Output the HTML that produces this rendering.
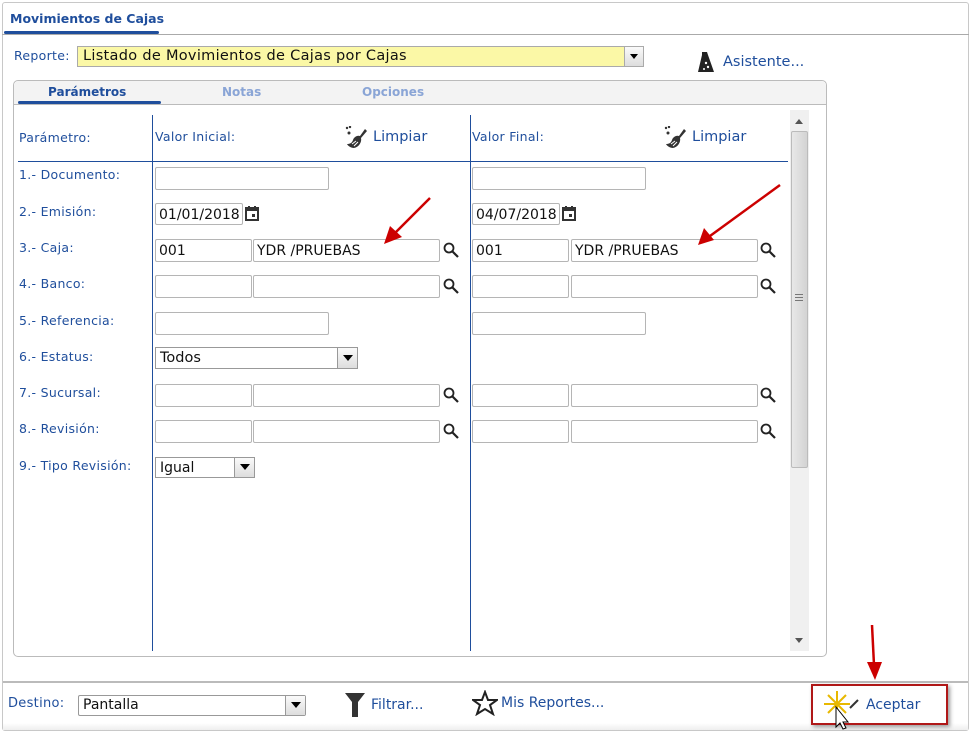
<!DOCTYPE html>
<html><head><meta charset="utf-8"><style>
*{box-sizing:border-box}
body{margin:0;width:974px;height:733px;background:#fff;font-family:Verdana,"DejaVu Sans",sans-serif;position:relative;overflow:hidden;font-size:13px;color:#1f4e9c}
.a{position:absolute}
.lbl{position:absolute;font-size:12.5px;color:#1f4e9c;letter-spacing:.3px}
.in{position:absolute;border:1px solid #b5b5b5;border-radius:2px;background:#fff;height:23px;font-size:14px;color:#111;padding:3px 0 0 3px;white-space:nowrap;overflow:hidden}
.mag{position:absolute;width:16px;height:16px}
</style></head><body>
<div class="a" style="left:2px;top:2px;width:967px;height:729px;border:1px solid #c8c8c8;border-radius:3px"></div>
<div class="a" style="left:2px;top:34px;width:967px;height:1px;background:#aaa"></div>
<div class="a" style="left:10px;top:11px;font-weight:bold;font-size:12.5px;color:#1f4e9c">Movimientos de Cajas</div>
<div class="a" style="left:4px;top:31px;width:155px;height:3px;background:#1f4e9c;border-radius:2px"></div>

<div class="lbl" style="left:14px;top:48px">Reporte:</div>
<div class="a" style="left:77px;top:46px;width:567px;height:21px;border:1px solid #aaa;background:#fbf8a6;font-size:14.5px;color:#111;padding:1px 5px;letter-spacing:.3px">Listado de Movimientos de Cajas por Cajas</div>
<div class="a" style="left:624px;top:47px;width:19px;height:19px;background:linear-gradient(#fafafa,#ddd);border-left:1px solid #aaa"><div style="margin:7px 0 0 5px;width:0;height:0;border-left:4px solid transparent;border-right:4px solid transparent;border-top:5px solid #000"></div></div>
<svg class="a" style="left:697px;top:51px" width="18" height="22"><path d="M5 1h5l1 3 6 17H1L5 4z" fill="#222"/><circle cx="9" cy="12" r="1.2" fill="#fff"/><circle cx="11" cy="16" r="1.2" fill="#fff"/><circle cx="7" cy="18" r="1" fill="#fff"/></svg>
<div class="a" style="left:723px;top:54px;font-size:14.5px;color:#1f4e9c">Asistente...</div>

<div class="a" style="left:13px;top:80px;width:814px;height:577px;border:1px solid #bbb;border-radius:5px"></div>
<div class="a" style="left:14px;top:81px;width:812px;height:24px;background:#f3f3f3;border-bottom:1px solid #bbb;border-radius:5px 5px 0 0"></div>
<div class="a" style="left:48px;top:85px;font-weight:bold;font-size:12px;color:#1f4e9c">Parámetros</div>
<div class="a" style="left:222px;top:85px;font-weight:bold;font-size:12px;color:#8aa5d6">Notas</div>
<div class="a" style="left:362px;top:85px;font-weight:bold;font-size:12px;color:#8aa5d6">Opciones</div>
<div class="a" style="left:18px;top:101px;width:143px;height:3px;background:#1f4e9c;border-radius:2px"></div>

<div class="a" style="left:152px;top:115px;width:1px;height:536px;background:#1f4e9c"></div>
<div class="a" style="left:470px;top:115px;width:1px;height:536px;background:#1f4e9c"></div>
<div class="a" style="left:18px;top:161px;width:770px;height:1px;background:#1f4e9c"></div>
<div class="lbl" style="left:19px;top:130px">Parámetro:</div>
<div class="lbl" style="left:155px;top:129px">Valor Inicial:</div>
<div class="lbl" style="left:472px;top:129px">Valor Final:</div>
<svg class="a" style="left:345px;top:126px" width="24" height="24"><circle cx="2" cy="2" r="1.2" fill="#333"/><circle cx="5" cy="1" r="1.2" fill="#333"/><circle cx="4" cy="7" r="1.5" fill="#333"/><path d="M20 3l2 2-6 7c1 4-2 9-7 10-3 0-6-2-7-4 3 0 5-1 6-4 1-3 4-5 7-4z" fill="#333"/><path d="M7 18l4-3M9 20l4-4" stroke="#fff" stroke-width="1"/></svg>
<div class="a" style="left:373px;top:129px;font-size:14.5px">Limpiar</div>
<svg class="a" style="left:664px;top:126px" width="24" height="24"><circle cx="2" cy="2" r="1.2" fill="#333"/><circle cx="5" cy="1" r="1.2" fill="#333"/><circle cx="4" cy="7" r="1.5" fill="#333"/><path d="M20 3l2 2-6 7c1 4-2 9-7 10-3 0-6-2-7-4 3 0 5-1 6-4 1-3 4-5 7-4z" fill="#333"/><path d="M7 18l4-3M9 20l4-4" stroke="#fff" stroke-width="1"/></svg>
<div class="a" style="left:692px;top:129px;font-size:14.5px">Limpiar</div>

<div class="a" style="left:790px;top:110px;width:19px;height:541px;background:#f0f0f0"></div>
<div class="a" style="left:791px;top:131px;width:17px;height:337px;background:linear-gradient(90deg,#e8e8e8,#d3d3d3);border:1px solid #bbb;border-radius:2px"></div>
<div class="a" style="left:795px;top:119px;width:0;height:0;border-left:4px solid transparent;border-right:4px solid transparent;border-bottom:5px solid #555"></div>
<div class="a" style="left:795px;top:638px;width:0;height:0;border-left:4px solid transparent;border-right:4px solid transparent;border-top:5px solid #555"></div>
<div class="a" style="left:795px;top:294px;width:8px;height:7px;border-top:1px solid #777;border-bottom:1px solid #777"><div style="margin-top:2px;height:1px;background:#777"></div></div>

<div class="lbl" style="left:19px;top:167px">1.- Documento:</div>
<div class="lbl" style="left:19px;top:204px">2.- Emisión:</div>
<div class="lbl" style="left:19px;top:240px">3.- Caja:</div>
<div class="lbl" style="left:19px;top:276px">4.- Banco:</div>
<div class="lbl" style="left:19px;top:313px">5.- Referencia:</div>
<div class="lbl" style="left:19px;top:349px">6.- Estatus:</div>
<div class="lbl" style="left:19px;top:385px">7.- Sucursal:</div>
<div class="lbl" style="left:19px;top:421px">8.- Revisión:</div>
<div class="lbl" style="left:19px;top:458px">9.- Tipo Revisión:</div>

<div class="in" style="left:155px;top:167px;width:174px"></div>
<div class="in" style="left:472px;top:167px;width:174px"></div>
<div class="in" style="left:155px;top:203px;width:88px;height:22px">01/01/2018</div>
<div class="in" style="left:472px;top:203px;width:88px;height:22px">04/07/2018</div>
<svg class="a" style="left:245px;top:206px" width="14" height="15"><rect x="1" y="2" width="12" height="12" fill="none" stroke="#333" stroke-width="2"/><rect x="1" y="2" width="12" height="3" fill="#333"/><rect x="3" y="0" width="2" height="3" fill="#333"/><rect x="9" y="0" width="2" height="3" fill="#333"/><rect x="7" y="8" width="3" height="3" fill="#333"/></svg>
<svg class="a" style="left:562px;top:206px" width="14" height="15"><rect x="1" y="2" width="12" height="12" fill="none" stroke="#333" stroke-width="2"/><rect x="1" y="2" width="12" height="3" fill="#333"/><rect x="3" y="0" width="2" height="3" fill="#333"/><rect x="9" y="0" width="2" height="3" fill="#333"/><rect x="7" y="8" width="3" height="3" fill="#333"/></svg>

<div class="in" style="left:155px;top:239px;width:97px">001</div>
<div class="in" style="left:253px;top:239px;width:187px">YDR /PRUEBAS</div>
<div class="in" style="left:472px;top:239px;width:97px">001</div>
<div class="in" style="left:571px;top:239px;width:187px">YDR /PRUEBAS</div>
<div class="in" style="left:155px;top:275px;width:97px"></div>
<div class="in" style="left:253px;top:275px;width:187px"></div>
<div class="in" style="left:472px;top:275px;width:97px"></div>
<div class="in" style="left:571px;top:275px;width:187px"></div>
<div class="in" style="left:155px;top:312px;width:174px"></div>
<div class="in" style="left:472px;top:312px;width:174px"></div>
<div class="in" style="left:155px;top:384px;width:97px"></div>
<div class="in" style="left:253px;top:384px;width:187px"></div>
<div class="in" style="left:472px;top:384px;width:97px"></div>
<div class="in" style="left:571px;top:384px;width:187px"></div>
<div class="in" style="left:155px;top:420px;width:97px"></div>
<div class="in" style="left:253px;top:420px;width:187px"></div>
<div class="in" style="left:472px;top:420px;width:97px"></div>
<div class="in" style="left:571px;top:420px;width:187px"></div>

<div class="a" style="left:155px;top:347px;width:203px;height:22px;border:1px solid #999;font-size:14.5px;color:#111;padding:2px 4px">Todos</div>
<div class="a" style="left:337px;top:348px;width:20px;height:20px;background:linear-gradient(#fafafa,#ddd);border-left:1px solid #999"><div style="margin:7px 0 0 5px;width:0;height:0;border-left:5px solid transparent;border-right:5px solid transparent;border-top:6px solid #000"></div></div>
<div class="a" style="left:155px;top:457px;width:100px;height:21px;border:1px solid #999;font-size:14px;color:#111;padding:2px 4px">Igual</div>
<div class="a" style="left:234px;top:458px;width:20px;height:19px;background:linear-gradient(#fafafa,#ddd);border-left:1px solid #999"><div style="margin:6px 0 0 5px;width:0;height:0;border-left:5px solid transparent;border-right:5px solid transparent;border-top:6px solid #000"></div></div>

<svg class="a" width="0" height="0"><defs><symbol id="m" viewBox="0 0 16 16"><circle cx="6" cy="6" r="4.5" fill="none" stroke="#222" stroke-width="1.8"/><path d="M9.5 9.5L15 15" stroke="#222" stroke-width="2.2"/></symbol></defs></svg>
<svg class="mag" style="left:443px;top:242px"><use href="#m"/></svg>
<svg class="mag" style="left:760px;top:242px"><use href="#m"/></svg>
<svg class="mag" style="left:443px;top:278px"><use href="#m"/></svg>
<svg class="mag" style="left:760px;top:278px"><use href="#m"/></svg>
<svg class="mag" style="left:443px;top:387px"><use href="#m"/></svg>
<svg class="mag" style="left:760px;top:387px"><use href="#m"/></svg>
<svg class="mag" style="left:443px;top:423px"><use href="#m"/></svg>
<svg class="mag" style="left:760px;top:423px"><use href="#m"/></svg>

<svg class="a" style="left:0;top:0" width="974" height="733">
<g stroke="#c00" stroke-width="2.5" fill="#c00">
<line x1="430" y1="198" x2="395" y2="233"/><polygon points="384,244 390,226 402,237" stroke="none"/>
<line x1="780" y1="185" x2="710" y2="236"/><polygon points="698,245 704,228 714,240" stroke="none"/>
<line x1="872" y1="625" x2="874" y2="665"/><polygon points="875,680 867,662 882,662" stroke="none"/>
</g></svg>

<div class="a" style="left:3px;top:681px;width:965px;height:2px;background:#bbb"></div>
<div class="a" style="left:3px;top:683px;width:965px;height:47px;background:linear-gradient(#fff,#fff 85%,#eee)"></div>
<div class="lbl" style="left:8px;top:696px;font-size:13px">Destino:</div>
<div class="a" style="left:78px;top:695px;width:228px;height:21px;border:1px solid #999;border-radius:2px;font-size:14px;color:#111;padding:1px 4px">Pantalla</div>
<div class="a" style="left:285px;top:696px;width:20px;height:19px;background:linear-gradient(#fafafa,#ddd);border-left:1px solid #999"><div style="margin:6px 0 0 5px;width:0;height:0;border-left:5px solid transparent;border-right:5px solid transparent;border-top:6px solid #000"></div></div>
<svg class="a" style="left:344px;top:691px" width="22" height="28"><path d="M1 2h20l-7 9v15h-6V11z" fill="#333"/></svg>
<div class="a" style="left:371px;top:697px;font-size:14px">Filtrar...</div>
<svg class="a" style="left:472px;top:690px" width="26" height="26"><path d="M13 2l3 8h9l-7 5 3 9-8-5-8 5 3-9-7-5h9z" fill="none" stroke="#222" stroke-width="2"/></svg>
<div class="a" style="left:501px;top:695px;font-size:14px">Mis Reportes...</div>
<div class="a" style="left:811px;top:684px;width:137px;height:41px;border:2px solid #b01818;box-shadow:2px 2px 4px #999"></div>
<svg class="a" style="left:820px;top:688px" width="40" height="42"><g stroke="#e8b800" stroke-width="2"><line x1="4" y1="16" x2="30" y2="16"/><line x1="17" y1="3" x2="17" y2="29"/><line x1="8" y1="7" x2="26" y2="25"/><line x1="26" y1="7" x2="8" y2="25"/></g><line x1="30" y1="20" x2="38" y2="12" stroke="#333" stroke-width="2"/><path d="M16 19v20l4-4 3 6 3-1-3-6h5z" fill="#fff" stroke="#000" stroke-width="1"/></svg>
<div class="a" style="left:866px;top:697px;font-size:14px">Aceptar</div>
</body></html>
